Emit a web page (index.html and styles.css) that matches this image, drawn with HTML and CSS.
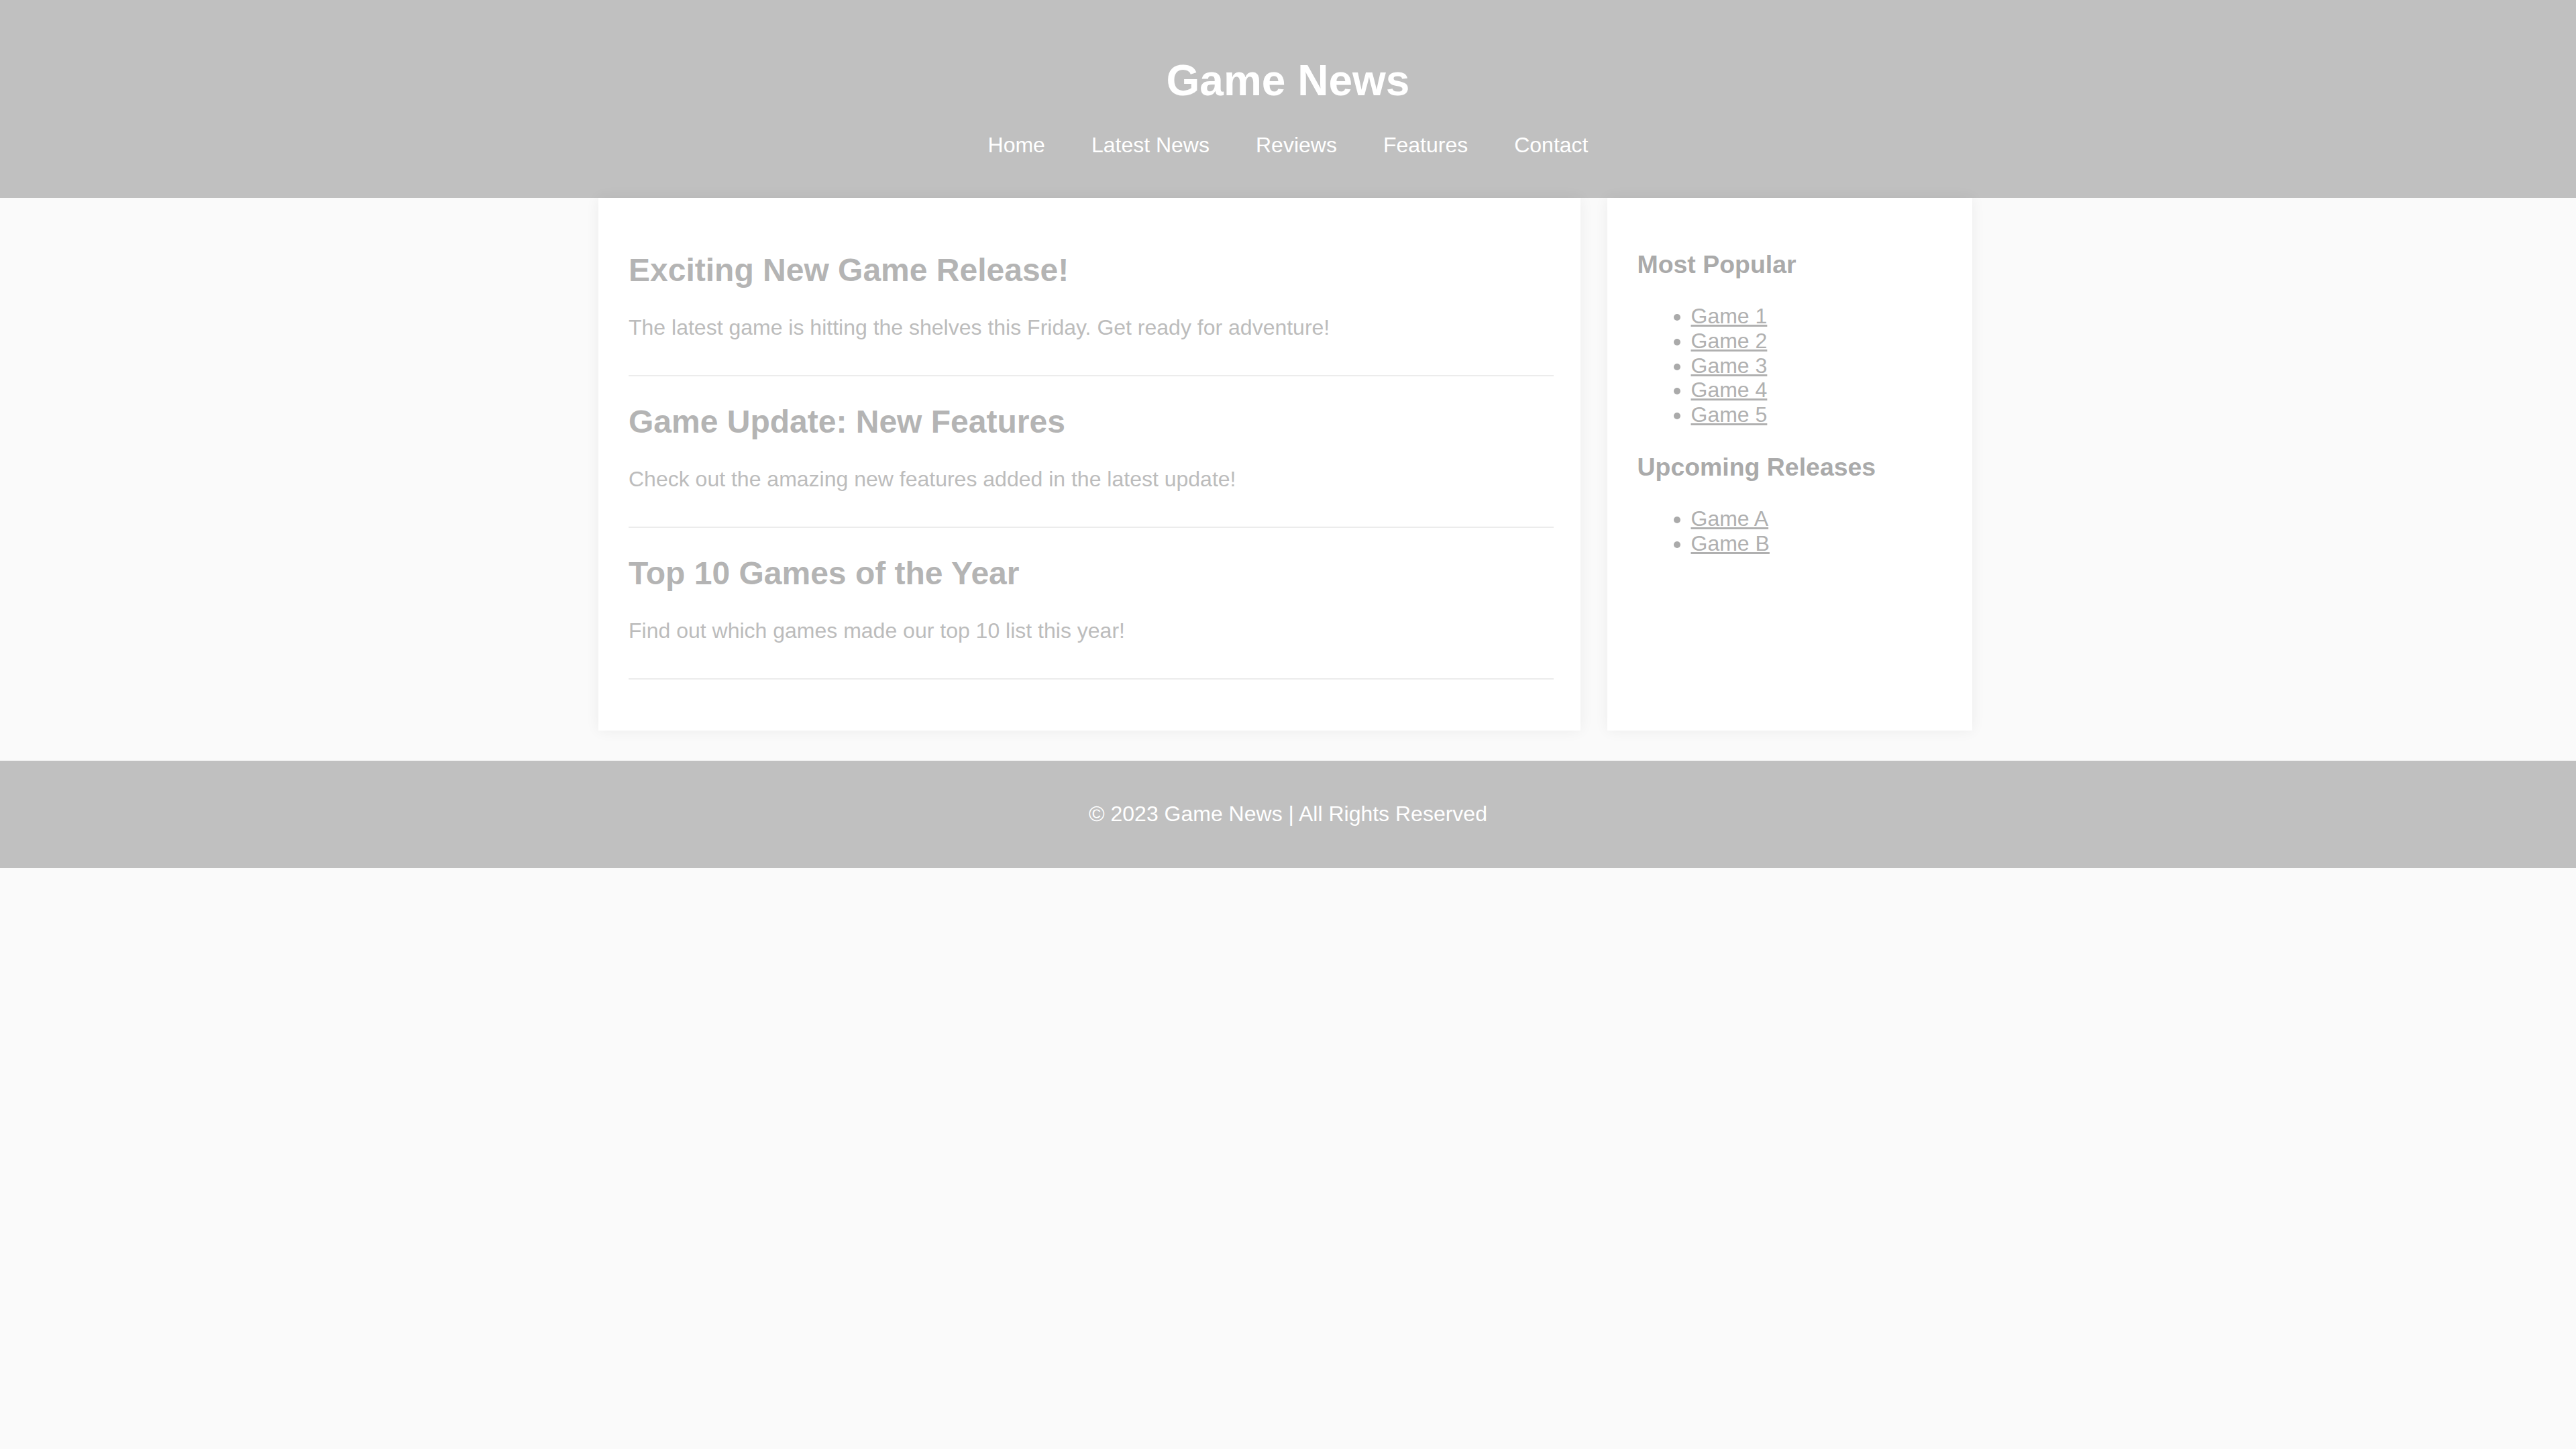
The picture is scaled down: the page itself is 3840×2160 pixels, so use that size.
FILE: index.html
```html
<!DOCTYPE html>
<html lang="en">
<head>
<meta charset="utf-8">
<title>Game News</title>
<link rel="stylesheet" href="styles.css">
</head>
<body>
<header class="site-header">
  <h1 class="site-title">Game News</h1>
  <nav class="site-nav">
    <a href="#">Home</a>
    <a href="#">Latest News</a>
    <a href="#">Reviews</a>
    <a href="#">Features</a>
    <a href="#">Contact</a>
  </nav>
</header>
<div class="container">
  <main class="main-content">
    <article class="article">
      <h2>Exciting New Game Release!</h2>
      <p>The latest game is hitting the shelves this Friday. Get ready for adventure!</p>
    </article>
    <article class="article">
      <h2>Game Update: New Features</h2>
      <p>Check out the amazing new features added in the latest update!</p>
    </article>
    <article class="article">
      <h2>Top 10 Games of the Year</h2>
      <p>Find out which games made our top 10 list this year!</p>
    </article>
  </main>
  <aside class="sidebar">
    <h3>Most Popular</h3>
    <ul>
      <li><a href="#">Game 1</a></li>
      <li><a href="#">Game 2</a></li>
      <li><a href="#">Game 3</a></li>
      <li><a href="#">Game 4</a></li>
      <li><a href="#">Game 5</a></li>
    </ul>
    <h3>Upcoming Releases</h3>
    <ul>
      <li><a href="#">Game A</a></li>
      <li><a href="#">Game B</a></li>
    </ul>
  </aside>
</div>
<footer class="site-footer">
  <p>&copy; 2023 Game News | All Rights Reserved</p>
</footer>
</body>
</html>
```

FILE: styles.css
```css
html, body {
  margin: 0;
  padding: 0;
}
body {
  background: #fafafa;
  font-family: "Liberation Sans", Arial, sans-serif;
  font-size: 32px;
  line-height: 1.15;
}
.site-header {
  background: #c0c0c0;
  color: #ffffff;
  text-align: center;
  padding: 40px 0 60px;
}
.site-title {
  margin: 43px 0 41px;
  font-size: 64px;
  font-weight: bold;
  line-height: 74px;
}
.site-nav {
  display: flex;
  justify-content: center;
  gap: 69px;
  line-height: 37px;
}
.site-nav a {
  color: #ffffff;
  text-decoration: none;
}
.container {
  display: flex;
  gap: 40px;
  width: 2048px;
  margin: 0 auto 45px;
  padding-right: 8px;
  align-items: stretch;
}
.main-content,
.sidebar {
  background: #ffffff;
  padding: 40px 40px 36px 45px;
  box-shadow: 0 0 20px rgba(0, 0, 0, 0.06);
}
.main-content {
  flex: 3 1 0;
}
.sidebar {
  flex: 1 1 0;
}
.article {
  padding-bottom: 20px;
  border-bottom: 2px solid #ececec;
  margin-bottom: 40px;
}
.article h2 {
  font-size: 48px;
  font-weight: bold;
  color: #b4b4b4;
  margin: 40px 0;
  line-height: 55px;
}
.article p {
  color: #bcbcbc;
  margin: 32px 0;
  line-height: 37px;
}
.sidebar h3 {
  font-size: 37.44px;
  font-weight: bold;
  color: #aaaaaa;
  margin: 38px 0 37px;
  line-height: 43px;
}
.sidebar ul {
  margin: 32px 0;
  padding-left: 80px;
  color: #aaaaaa;
  line-height: 36.8px;
}
.sidebar a {
  color: #b0b0b0;
  text-decoration: underline;
}
.site-footer {
  background: #c0c0c0;
  color: #ffffff;
  text-align: center;
  padding: 61px 0 62px;
}
.site-footer p {
  margin: 0;
  line-height: 37px;
}
```
